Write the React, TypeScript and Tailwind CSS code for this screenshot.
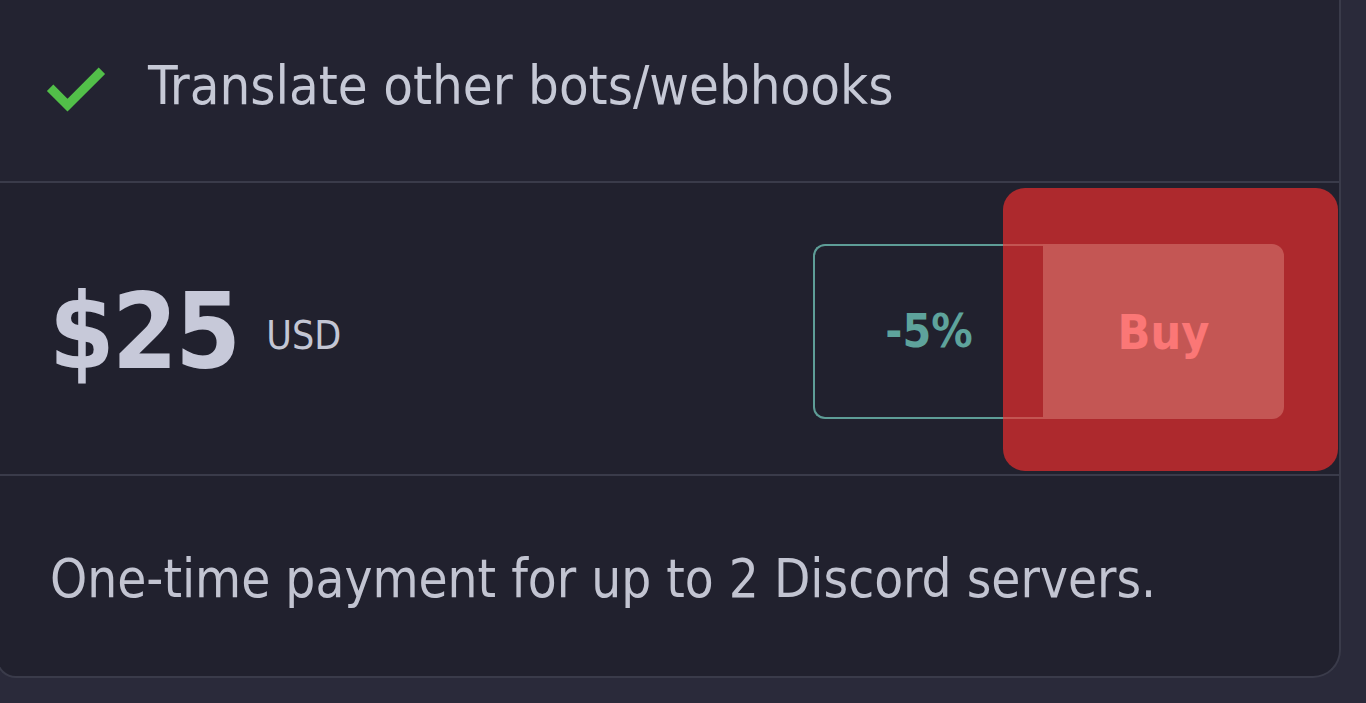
import React from 'react';

const font = { fontFamily: '"DejaVu Sans Condensed", "DejaVu Sans", sans-serif' };

const CheckIcon: React.FC = () => (
  <svg width="68" height="68" viewBox="0 0 24 24" fill="none" stroke="#52bf49" strokeWidth="3.2" strokeLinecap="square" strokeLinejoin="miter">
    <polyline points="20 6 9 17 4 12" />
  </svg>
);

const PlanCard: React.FC = () => {
  return (
    <div className="-ml-[4px] w-[1345px] bg-[#21212e] border-r-2 border-b-2 border-l-2 border-[#3a3b4a] rounded-bl-[20px] rounded-br-[28px]">
      {/* feature list tail */}
      <div className="h-[183px] flex items-center pl-[44px] border-b-2 border-[#3a3b4a] bg-[#232331]">
        <CheckIcon />
        <span className="ml-[38px] text-[54px] text-[#c6c9d6] leading-none -mt-[10px]">Translate other bots/webhooks</span>
      </div>

      {/* price + actions */}
      <div className="h-[293px] flex items-center justify-between pl-[51px] pr-[55px] border-b-2 border-[#3a3b4a]">
        <div className="flex items-start mt-[8px]">
          <span className="text-[105px] font-bold text-[#c7c9d9] leading-none tracking-tight">$25</span>
          <span className="ml-[28px] mt-[36px] text-[39px] text-[#c3c6d4] leading-none">USD</span>
        </div>

        <div className="flex h-[175px] mt-[6px]">
          <div className="w-[230px] flex items-center justify-center border-2 border-r-0 border-[#5e9d97] rounded-l-[12px] text-[#5ea39c] text-[46px] font-bold">
            -5%
          </div>
          <div className="relative w-[241px] flex items-center justify-center bg-[#61a09d] rounded-r-[12px] text-white text-[48px] font-bold">
            Buy
            {/* highlight overlay */}
            <div className="absolute -left-[40px] -top-[56px] -right-[54px] -bottom-[52px] rounded-[22px] bg-[rgba(249,46,45,0.65)]" />
          </div>
        </div>
      </div>

      <div className="h-[200px] flex items-center pl-[52px]">
        <span className="text-[52.6px] text-[#c2c4d1] leading-none mt-[6px]">One-time payment for up to 2 Discord servers.</span>
      </div>
    </div>
  );
};

export default function App() {
  return (
    <div className="w-[1366px] h-[703px] overflow-hidden bg-[#2a2a3a]" style={font}>
      <PlanCard />
    </div>
  );
}
